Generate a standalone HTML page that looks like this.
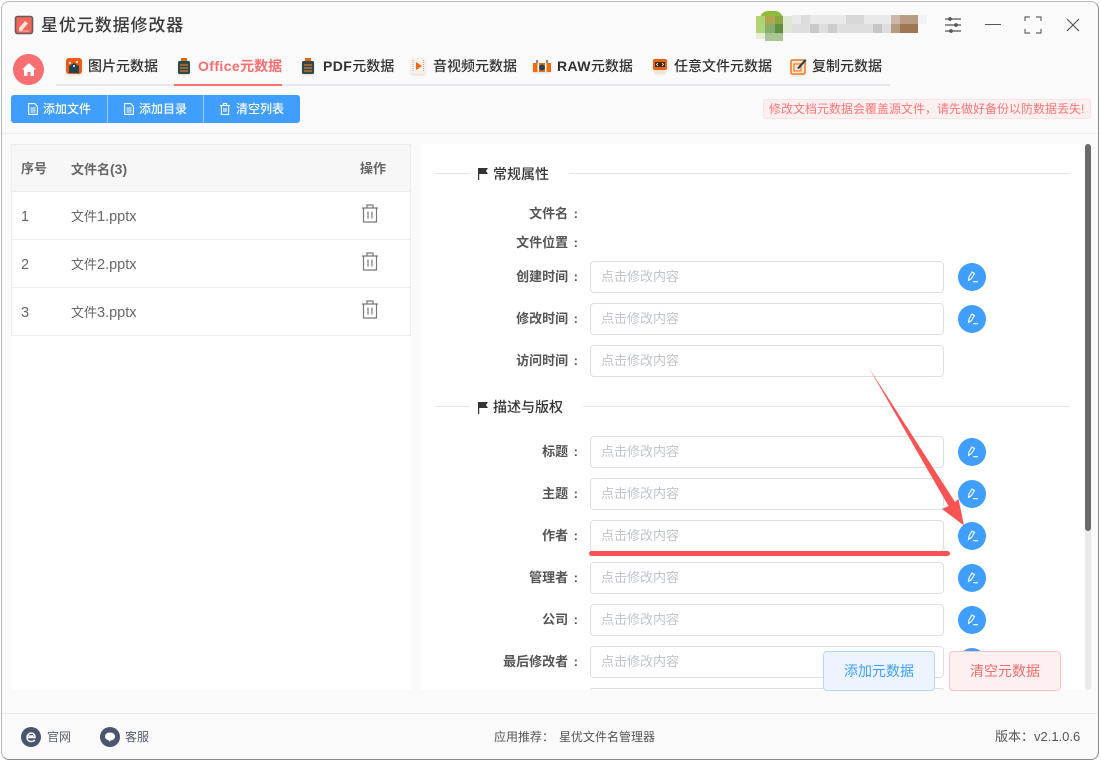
<!DOCTYPE html>
<html lang="zh"><head><meta charset="utf-8"><style>
html,body{margin:0;padding:0;width:1101px;height:762px;overflow:hidden;background:#fff}
body{font-family:"Liberation Sans","Noto Sans CJK SC",sans-serif;position:relative}
.a{position:absolute;white-space:nowrap}
#win{position:absolute;left:1px;top:1px;width:1098px;height:759px;background:#fafafa;border:1px solid #b9b9b9;border-right-color:#8a8a8a;border-bottom-color:#8a8a8a;border-radius:8px;box-sizing:border-box}
.tab{position:absolute;top:57px;font-size:14px;line-height:18px;font-weight:500;color:#303133;white-space:nowrap}
.tab b{font-weight:700;letter-spacing:.4px}
.ti{filter:drop-shadow(0 1px 1px #e6d9cb)}
.tbt{position:absolute;top:95px;height:28px;line-height:28px;color:#fff;font-size:12px;font-weight:500;white-space:nowrap}
.line{position:absolute;background:#e4e6e9;height:1px}
.lb{position:absolute;width:150px;left:428px;text-align:right;font-size:13px;font-weight:700;line-height:18px;color:#555;white-space:nowrap;top:0}
.lb i{font-style:normal;margin-left:5.5px}
.ip{position:absolute;left:590px;width:354px;height:32px;box-sizing:border-box;background:#fff;border:1px solid #dcdfe6;border-radius:4px;font-size:13px;line-height:30px;color:#c0c4cc;padding-left:10px}
.ed{position:absolute;left:958px;width:28px;height:28px}
.rw{position:absolute;left:11px;width:400px;height:48px;box-sizing:border-box;border:1px solid #ebeef5;border-top:0;background:#fff;font-size:13px;color:#666}
.rw span,.hd span{position:absolute;top:15px;line-height:18px;white-space:nowrap}
.rw span{top:15px}
.rw em{font-style:normal;font-size:14.500px}
.tr{position:absolute;left:349px;top:12px}
.st{position:absolute;left:72px;font-size:14px;font-weight:500;line-height:18px;color:#333}
</style></head><body>
<div id="win"></div>

<svg class="a" style="left:14px;top:15px" width="20" height="20" viewBox="0 0 20 20"><rect x="1.500" y="1.500" width="17" height="17" rx="2" fill="#f0675c" stroke="#6a5a58" stroke-width="1.600"/><path d="M5 13l6-7 3 2.500-6 7H5z" fill="#fde3dd"/><path d="M5 16h10" stroke="#fbb8ae" stroke-width="1"/></svg>
<div class="a" style="left:41px;top:15px;font-size:17px;line-height:22px;letter-spacing:.9px;font-weight:500;color:#3a3a3a">星优元数据修改器</div>

<div class="a" style="left:760px;top:11px;width:23px;height:8px;background:#8fbc3a;border-radius:12px 12px 0 0"></div>
<div class="a" style="left:756px;top:16px;width:9px;height:8px;background:#b0d274"></div>
<div class="a" style="left:765px;top:16px;width:10px;height:8px;background:#b2a650"></div>
<div class="a" style="left:775px;top:16px;width:8px;height:8px;background:#89a843"></div>
<div class="a" style="left:756px;top:24px;width:9px;height:9px;background:#b2d57a"></div>
<div class="a" style="left:765px;top:24px;width:10px;height:9px;background:#86ae6c"></div>
<div class="a" style="left:775px;top:24px;width:8px;height:9px;background:#5d8f3f"></div>
<div class="a" style="left:756px;top:33px;width:9px;height:6px;background:#e5efd5"></div>
<div class="a" style="left:765px;top:33px;width:18px;height:8px;background:#a9c594"></div>
<div class="a" style="left:783px;top:16px;width:9px;height:17px;background:#dfe8d2"></div>
<div class="a" style="left:792px;top:15px;width:99px;height:9px;background:#e9e9e9"></div>
<div class="a" style="left:792px;top:24px;width:99px;height:9px;background:#dedede"></div>
<div class="a" style="left:801px;top:15px;width:9px;height:9px;background:#dcdcdc"></div>
<div class="a" style="left:810px;top:24px;width:9px;height:9px;background:#c9c9c9"></div>
<div class="a" style="left:828px;top:24px;width:9px;height:9px;background:#cccccc"></div>
<div class="a" style="left:846px;top:15px;width:18px;height:9px;background:#d8d8d8"></div>
<div class="a" style="left:873px;top:24px;width:9px;height:9px;background:#c6c6c6"></div>
<div class="a" style="left:891px;top:15px;width:9px;height:9px;background:#cdb9a9"></div>
<div class="a" style="left:900px;top:15px;width:18px;height:9px;background:#b89d84"></div>
<div class="a" style="left:891px;top:24px;width:9px;height:9px;background:#b59a80"></div>
<div class="a" style="left:900px;top:24px;width:18px;height:9px;background:#9f7654"></div>
<div class="a" style="left:918px;top:15px;width:9px;height:9px;background:#f3f3f3"></div>

<svg class="a" style="left:943px;top:15px" width="20" height="20" viewBox="0 0 20 20" fill="none" stroke="#555" stroke-width="1.300"><path d="M2 4h16M2 10h16M2 16h16"/><circle cx="7" cy="4" r="1.200" fill="#555"/><circle cx="13" cy="10" r="1.200" fill="#555"/><circle cx="8" cy="16" r="1.200" fill="#555"/></svg>
<div class="a" style="left:985px;top:24px;width:16px;height:1px;background:#555"></div>
<svg class="a" style="left:1024px;top:16px" width="18" height="18" viewBox="0 0 18 18" fill="none" stroke="#666" stroke-width="1.200"><path d="M1 5V1h5M12 1h5v4M17 13v4h-5M6 17H1v-4"/></svg>
<svg class="a" style="left:1066px;top:18px" width="14" height="14" viewBox="0 0 14 14" fill="none" stroke="#555" stroke-width="1.200"><path d="M1 1l12 12M13 1L1 13"/></svg>

<div class="a" style="left:13px;top:54px;width:31px;height:31px;border-radius:50%;background:#f96e70"></div>
<svg class="a" style="left:22px;top:63px" width="14" height="13" viewBox="0 0 14 13"><path d="M7 0L0 6.500h2V13h3.500V9h3v4H12V6.500h2z" fill="#fff"/></svg>

<div class="a" style="left:56px;top:84px;width:834px;height:2px;background:#e4e7ed"></div>
<div class="a" style="left:174px;top:84px;width:108px;height:2px;background:#f96e70"></div>

<svg class="a ti" style="left:66px;top:58px" width="16" height="16" viewBox="0 0 16 16"><rect width="16" height="16" rx="3" fill="#ef5a14"/><path d="M3 15V8l5-3 5 3v7z" fill="#1f4652"/><circle cx="4" cy="5" r="1" fill="#fff"/><circle cx="11" cy="4" r="1" fill="#fff"/><circle cx="8" cy="8" r="1" fill="#fff"/></svg>
<div class="tab" style="left:88px">图片元数据</div>
<svg class="a ti" style="left:177px;top:58px" width="14" height="16" viewBox="0 0 14 16"><rect x="4" y="0" width="6" height="4" fill="#f0640f"/><rect x="1" y="3" width="12" height="13" rx="1.500" fill="#2f4a4a"/><path d="M3 7h8M3 10h8M3 13h8" stroke="#d8772e" stroke-width="1.200"/></svg>
<div class="tab" style="left:198px;color:#f96e70;font-weight:700"><b>Office</b>元数据</div>
<svg class="a ti" style="left:301px;top:58px" width="14" height="16" viewBox="0 0 14 16"><rect x="4" y="0" width="6" height="4" fill="#f0640f"/><rect x="1" y="3" width="12" height="13" rx="1.500" fill="#2f4a4a"/><path d="M3 7h8M3 10h8M3 13h8" stroke="#d8772e" stroke-width="1.200"/></svg>
<div class="tab" style="left:323px"><b>PDF</b>元数据</div>
<svg class="a ti" style="left:410px;top:58px" width="16" height="16" viewBox="0 0 16 16"><rect x="1" y="0" width="14" height="16" rx="2" fill="#f8f0e8"/><path d="M6 4l6 4-6 4z" fill="#ef6a12"/><path d="M3 2v12M13.500 2v12" stroke="#aaa" stroke-width="1" stroke-dasharray="1 1"/></svg>
<div class="tab" style="left:433px">音视频元数据</div>
<svg class="a ti" style="left:533px;top:58px" width="18" height="16" viewBox="0 0 18 16"><rect x="0" y="5" width="18" height="9" fill="#ef6a12"/><rect x="3" y="2" width="2" height="3" fill="#888"/><rect x="13" y="2" width="2" height="3" fill="#888"/><circle cx="9" cy="9.500" r="3" fill="#1f4652"/><rect x="4.500" y="5" width="1.500" height="9" fill="#fff"/><rect x="12" y="5" width="1.500" height="9" fill="#fff"/></svg>
<div class="tab" style="left:557px"><b>RAW</b>元数据</div>
<svg class="a ti" style="left:652px;top:58px" width="16" height="16" viewBox="0 0 16 16"><rect x="1" y="1" width="14" height="11" rx="2" fill="#e8630f"/><rect x="3" y="4" width="10" height="5" fill="#3a2a1a"/><path d="M6 5l-1.500 1.500L6 8M10 5l1.500 1.500L10 8" stroke="#fff" stroke-width=".8" fill="none"/><rect x="3" y="13" width="10" height="2" fill="#f3e3d6"/></svg>
<div class="tab" style="left:674px">任意文件元数据</div>
<svg class="a ti" style="left:790px;top:58px" width="17" height="17" viewBox="0 0 17 17"><rect x="1" y="2" width="14" height="14" rx="1.500" fill="#fbe6d6" stroke="#ef7a22" stroke-width="1.500"/><rect x="4" y="6" width="7" height="7" fill="none" stroke="#ef7a22" stroke-width="1.200"/><path d="M7 10l8-9 1.500 1.500L9 11z" fill="#24424c"/></svg>
<div class="tab" style="left:812px">复制元数据</div>

<div class="a" style="left:11px;top:95px;width:289px;height:28px;background:#409eff;border-radius:3px"></div>
<div class="a" style="left:107px;top:95px;width:1px;height:28px;background:#9ccbff"></div>
<div class="a" style="left:203px;top:95px;width:1px;height:28px;background:#9ccbff"></div>
<svg class="a" style="left:28px;top:103px" width="10" height="12" viewBox="0 0 10 12" fill="none" stroke="#fff" stroke-width="1.100"><path d="M.6.600h6l2.800 2.800v8H.6zM2.500 5h5M2.500 7h5M2.500 9h5"/></svg>
<div class="tbt" style="left:43px">添加文件</div>
<svg class="a" style="left:124px;top:103px" width="10" height="12" viewBox="0 0 10 12" fill="none" stroke="#fff" stroke-width="1.100"><path d="M.6.600h6l2.800 2.800v8H.6zM2.500 5h5M2.500 7h5M2.500 9h5"/></svg>
<div class="tbt" style="left:139px">添加目录</div>
<svg class="a" style="left:220px;top:103px" width="10" height="12" viewBox="0 0 10 12" fill="none" stroke="#fff" stroke-width="1.100"><path d="M0 2.500h10M3.500 2.500V.6h3v1.900M1.400 2.500v9h7.200v-9M4 5v4M6 5v4"/></svg>
<div class="tbt" style="left:236px">清空列表</div>

<div class="a" style="left:763px;top:99px;width:328px;height:20px;box-sizing:border-box;background:#fef0f0;border:1px solid #fde2e2;border-radius:3px;font-size:12px;line-height:18px;color:#f77;padding-left:5px">修改文档元数据会覆盖源文件，请先做好备份以防数据丢失!</div>

<div class="a" style="left:2px;top:133px;width:1096px;height:1px;background:#efefef"></div>

<div class="a" style="left:11px;top:144px;width:400px;height:546px;background:#fff"></div>
<div class="a hd" style="left:11px;top:144px;width:400px;height:48px;box-sizing:border-box;background:#f7f7f7;border:1px solid #ebeef5;font-size:13px;font-weight:700;color:#666">
<span style="left:9px">序号</span><span style="left:59px">文件名<em style="font-style:normal;font-size:14px">(3)</em></span><span style="left:348px">操作</span></div>
<div class="rw" style="top:192px"><span style="left:9px;top:16px"><em>1</em></span><span style="left:59px;top:16px">文件<em>1.pptx</em></span><svg class="tr" width="18" height="19" viewBox="0 0 18 19" fill="none" stroke="#777" stroke-width="1.200"><path d="M1 4h16M6 4V1h6v3M2.500 4v14h13V4M7 7.500v7M11 7.500v7"/></svg></div>
<div class="rw" style="top:240px"><span style="left:9px;top:16px"><em>2</em></span><span style="left:59px;top:16px">文件<em>2.pptx</em></span><svg class="tr" width="18" height="19" viewBox="0 0 18 19" fill="none" stroke="#777" stroke-width="1.200"><path d="M1 4h16M6 4V1h6v3M2.500 4v14h13V4M7 7.500v7M11 7.500v7"/></svg></div>
<div class="rw" style="top:288px"><span style="left:9px;top:16px"><em>3</em></span><span style="left:59px;top:16px">文件<em>3.pptx</em></span><svg class="tr" width="18" height="19" viewBox="0 0 18 19" fill="none" stroke="#777" stroke-width="1.200"><path d="M1 4h16M6 4V1h6v3M2.500 4v14h13V4M7 7.500v7M11 7.500v7"/></svg></div>

<div class="a" style="left:421px;top:144px;width:670px;height:546px;background:#fff;overflow:hidden">
<div class="line" style="left:14px;top:29px;width:35px"></div>
<svg class="a" style="left:57px;top:24px" width="11" height="12" viewBox="0 0 11 12"><path d="M0 0h10L8 3l2 3H1.200v6H0z" fill="#333"/></svg>
<div class="st" style="top:21px">常规属性</div>
<div class="line" style="left:148px;top:29px;width:501px"></div>
<div class="line" style="left:14px;top:262px;width:35px"></div>
<svg class="a" style="left:57px;top:258px" width="11" height="12" viewBox="0 0 11 12"><path d="M0 0h10L8 3l2 3H1.200v6H0z" fill="#333"/></svg>
<div class="st" style="top:254px">描述与版权</div>
<div class="line" style="left:162px;top:262px;width:487px"></div>
</div>

<div class="lb" style="top:205px">文件名<i>:</i></div>
<div class="lb" style="top:234px">文件位置<i>:</i></div>
<div class="lb" style="top:268px">创建时间<i>:</i></div>
<div class="lb" style="top:310px">修改时间<i>:</i></div>
<div class="lb" style="top:352px">访问时间<i>:</i></div>
<div class="lb" style="top:443px">标题<i>:</i></div>
<div class="lb" style="top:485px">主题<i>:</i></div>
<div class="lb" style="top:527px">作者<i>:</i></div>
<div class="lb" style="top:569px">管理者<i>:</i></div>
<div class="lb" style="top:611px">公司<i>:</i></div>
<div class="lb" style="top:653px">最后修改者<i>:</i></div>

<div class="ip" style="top:261px">点击修改内容</div>
<div class="ip" style="top:303px">点击修改内容</div>
<div class="ip" style="top:345px">点击修改内容</div>
<div class="ip" style="top:436px">点击修改内容</div>
<div class="ip" style="top:478px">点击修改内容</div>
<div class="ip" style="top:520px">点击修改内容</div>
<div class="ip" style="top:562px">点击修改内容</div>
<div class="ip" style="top:604px">点击修改内容</div>
<div class="ip" style="top:646px">点击修改内容</div>
<div class="ip" style="top:688px;height:2px;border-bottom:0;border-radius:4px 4px 0 0;overflow:hidden"></div>

<svg class="ed" style="top:263px" viewBox="0 0 28 28"><circle cx="14" cy="14" r="14" fill="#409eff"/><path d="M10.500 17.500l.5-3.500 3-5 2.500 1.500-3 5zM15 18.700h5" fill="none" stroke="#fff" stroke-width="1.100"/></svg>
<svg class="ed" style="top:305px" viewBox="0 0 28 28"><circle cx="14" cy="14" r="14" fill="#409eff"/><path d="M10.500 17.500l.5-3.500 3-5 2.500 1.500-3 5zM15 18.700h5" fill="none" stroke="#fff" stroke-width="1.100"/></svg>
<svg class="ed" style="top:438px" viewBox="0 0 28 28"><circle cx="14" cy="14" r="14" fill="#409eff"/><path d="M10.500 17.500l.5-3.500 3-5 2.500 1.500-3 5zM15 18.700h5" fill="none" stroke="#fff" stroke-width="1.100"/></svg>
<svg class="ed" style="top:480px" viewBox="0 0 28 28"><circle cx="14" cy="14" r="14" fill="#409eff"/><path d="M10.500 17.500l.5-3.500 3-5 2.500 1.500-3 5zM15 18.700h5" fill="none" stroke="#fff" stroke-width="1.100"/></svg>
<svg class="ed" style="top:522px" viewBox="0 0 28 28"><circle cx="14" cy="14" r="14" fill="#409eff"/><path d="M10.500 17.500l.5-3.500 3-5 2.500 1.500-3 5zM15 18.700h5" fill="none" stroke="#fff" stroke-width="1.100"/></svg>
<svg class="ed" style="top:564px" viewBox="0 0 28 28"><circle cx="14" cy="14" r="14" fill="#409eff"/><path d="M10.500 17.500l.5-3.500 3-5 2.500 1.500-3 5zM15 18.700h5" fill="none" stroke="#fff" stroke-width="1.100"/></svg>
<svg class="ed" style="top:606px" viewBox="0 0 28 28"><circle cx="14" cy="14" r="14" fill="#409eff"/><path d="M10.500 17.500l.5-3.500 3-5 2.500 1.500-3 5zM15 18.700h5" fill="none" stroke="#fff" stroke-width="1.100"/></svg>
<svg class="ed" style="top:648px" viewBox="0 0 28 28"><circle cx="14" cy="14" r="14" fill="#409eff"/></svg>

<div class="a" style="left:1085px;top:144px;width:6px;height:546px;background:#e9eaec;border-radius:3px"></div>
<div class="a" style="left:1085px;top:144px;width:6px;height:387px;background:#6a6c6c;border-radius:3px"></div>

<div class="a" style="left:589px;top:551px;width:361px;height:5px;background:#f95353;border-radius:3px"></div>
<svg class="a" style="left:860px;top:360px" width="110" height="170" viewBox="0 0 110 170"><path d="M9 8L95 142 98.500 139 104 165.500 82 149 88.500 146Z" fill="#f95353"/></svg>

<div class="a" style="left:823px;top:651px;width:112px;height:40px;box-sizing:border-box;background:#ecf5ff;border:1px solid #b3d8ff;border-radius:4px;color:#409eff;font-size:14px;line-height:38px;text-align:center">添加元数据</div>
<div class="a" style="left:949px;top:651px;width:112px;height:40px;box-sizing:border-box;background:#fef0f0;border:1px solid #fbc4c4;border-radius:4px;color:#f56c6c;font-size:14px;line-height:38px;text-align:center">清空元数据</div>

<div class="a" style="left:2px;top:713px;width:1096px;height:1px;background:#ebebeb"></div>
<svg class="a" style="left:21px;top:727px" width="20" height="20" viewBox="0 0 20 20"><circle cx="10" cy="10" r="10" fill="#4a5570"/><path d="M6 10.500h8c0-3-1.700-4.500-3.800-4.500S6 8 6 10.500s1.800 4 4.200 4c1.500 0 2.800-.6 3.500-1.800M7.500 9h5" fill="none" stroke="#fff" stroke-width="1.500"/></svg>
<div class="a" style="left:47px;top:728px;font-size:12px;line-height:18px;color:#555c6b">官网</div>
<svg class="a" style="left:100px;top:727px" width="20" height="20" viewBox="0 0 20 20"><circle cx="10" cy="10" r="10" fill="#4a5570"/><path d="M5 9.500C5 7 7.200 5.500 10 5.500s5 1.500 5 4-2.500 4-4.500 4l-1.500 1.500v-1.600C6.500 13 5 11.500 5 9.500z" fill="#fff"/></svg>
<div class="a" style="left:125px;top:728px;font-size:12px;line-height:18px;color:#555c6b">客服</div>
<div class="a" style="left:494px;top:728px;font-size:12px;line-height:18px;color:#555">应用推荐：</div>
<div class="a" style="left:559px;top:728px;font-size:12px;line-height:18px;color:#555">星优文件名管理器</div>
<div class="a" style="left:995px;top:728px;font-size:13px;line-height:18px;color:#555">版本：v2.1.0.6</div>
</body></html>
